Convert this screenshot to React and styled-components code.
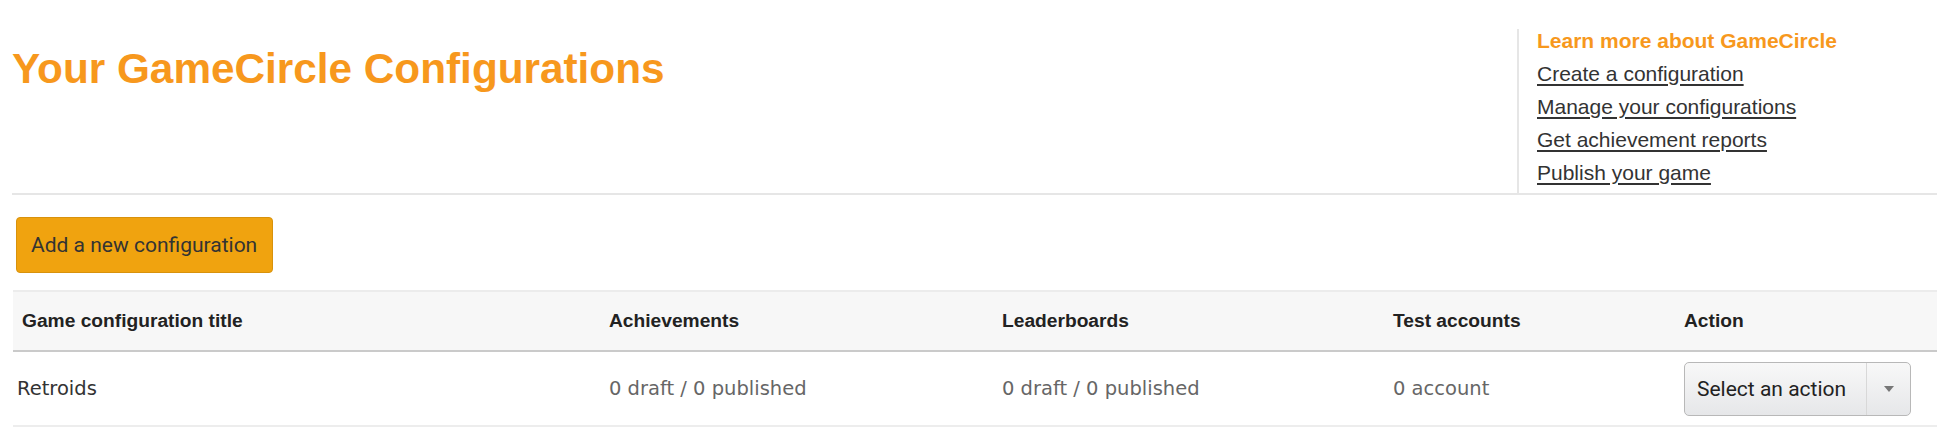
import React from 'react';
import styled, { createGlobalStyle } from 'styled-components';

const GlobalStyle = createGlobalStyle`
  body {
    margin: 0;
    background: #fff;
    font-family: "Liberation Sans", Arial, sans-serif;
  }
`;

const Page = styled.div`
  padding-left: 12px;
`;

const Header = styled.div`
  display: flex;
  border-bottom: 2px solid #e6e6e6;
`;

const Title = styled.h1`
  flex: 1;
  margin: 0;
  padding-top: 45px;
  font-family: "Liberation Sans", Arial, sans-serif;
  font-size: 42.3px;
  font-weight: bold;
  line-height: normal;
  color: #f7981d;
`;

const Sidebar = styled.ul`
  flex-shrink: 0;
  width: 400px;
  margin: 29px 0 0;
  padding: 0 0 8px 18px;
  list-style: none;
  border-left: 2px solid #e6e6e6;
  display: flex;
  flex-direction: column;
  gap: 9px;
`;

const SideItem = styled.li`
  font-size: 21px;
  line-height: 24px;
  font-weight: ${p => (p.$head ? 'bold' : 'normal')};
  color: ${p => (p.$head ? '#f7981d' : '#333')};
`;

const SideLink = styled.a`
  color: #333;
  text-decoration: underline;
  text-decoration-thickness: 2px;
  text-underline-offset: 3px;
`;

const AddButton = styled.button`
  display: block;
  box-sizing: border-box;
  width: 257px;
  height: 56px;
  margin: 22px 0 17px 4px;
  padding: 0 14px;
  background: #f0a30f;
  border: 1px solid #d8920c;
  border-radius: 4px;
  font-family: Roboto, "Liberation Sans", sans-serif;
  font-size: 21px;
  color: #333;
  text-align: left;
`;

const Table = styled.table`
  margin-left: 1px;
  width: calc(100% - 1px);
  table-layout: fixed;
  border-collapse: separate;
  border-spacing: 0;
`;

const Th = styled.th`
  box-sizing: border-box;
  height: 62px;
  padding: 0 9px;
  text-align: left;
  vertical-align: middle;
  background: #f7f7f7;
  border-top: 2px solid #ececec;
  border-bottom: 2px solid #cacaca;
  font-family: "Liberation Sans", Arial, sans-serif;
  font-size: 19.2px;
  font-weight: bold;
  color: #222;
`;

const Td = styled.td`
  box-sizing: border-box;
  height: 75px;
  padding: 0 9px 0 ${p => (p.$first ? '4px' : '9px')};
  vertical-align: middle;
  border-bottom: 2px solid #ededed;
  font-family: "DejaVu Sans", Verdana, sans-serif;
  font-size: 19.5px;
  color: ${p => (p.$first ? '#333' : '#666')};
`;

const ActionSelect = styled.div`
  box-sizing: border-box;
  display: flex;
  align-items: stretch;
  width: 227px;
  height: 54px;
  border: 1px solid #b8b8b8;
  border-radius: 5px;
  background: linear-gradient(#f8f8f8, #e6e7e9);
  font-family: Roboto, "Liberation Sans", sans-serif;
  font-size: 21px;
  color: #222;
`;

const SelectLabel = styled.span`
  flex: 1;
  display: flex;
  align-items: center;
  padding-left: 12px;
`;

const SelectArrow = styled.span`
  width: 43px;
  display: flex;
  align-items: center;
  justify-content: center;
  border-left: 1px solid #d8d8d8;

  &::after {
    content: '';
    border-top: 6px solid #777;
    border-left: 5px solid transparent;
    border-right: 5px solid transparent;
  }
`;

const links = [
  'Create a configuration',
  'Manage your configurations',
  'Get achievement reports',
  'Publish your game',
];

const columns = [
  { title: 'Game configuration title', width: 587 },
  { title: 'Achievements', width: 393 },
  { title: 'Leaderboards', width: 391 },
  { title: 'Test accounts', width: 291 },
  { title: 'Action' },
];

const App = () => {
  return (
    <Page>
      <GlobalStyle />
      <Header>
        <Title>Your GameCircle Configurations</Title>
        <Sidebar>
          <SideItem $head>Learn more about GameCircle</SideItem>
          {links.map(l => (
            <SideItem key={l}>
              <SideLink href="#">{l}</SideLink>
            </SideItem>
          ))}
        </Sidebar>
      </Header>

      <AddButton>Add a new configuration</AddButton>

      <Table>
        <colgroup>
          {columns.map(c => (
            <col key={c.title} style={c.width ? { width: c.width } : undefined} />
          ))}
        </colgroup>
        <thead>
          <tr>
            {columns.map(c => <Th key={c.title}>{c.title}</Th>)}
          </tr>
        </thead>
        <tbody>
          <tr>
            <Td $first>Retroids</Td>
            <Td>0 draft / 0 published</Td>
            <Td>0 draft / 0 published</Td>
            <Td>0 account</Td>
            <Td>
              <ActionSelect>
                <SelectLabel>Select an action</SelectLabel>
                <SelectArrow />
              </ActionSelect>
            </Td>
          </tr>
        </tbody>
      </Table>
    </Page>
  );
};

export default App;
